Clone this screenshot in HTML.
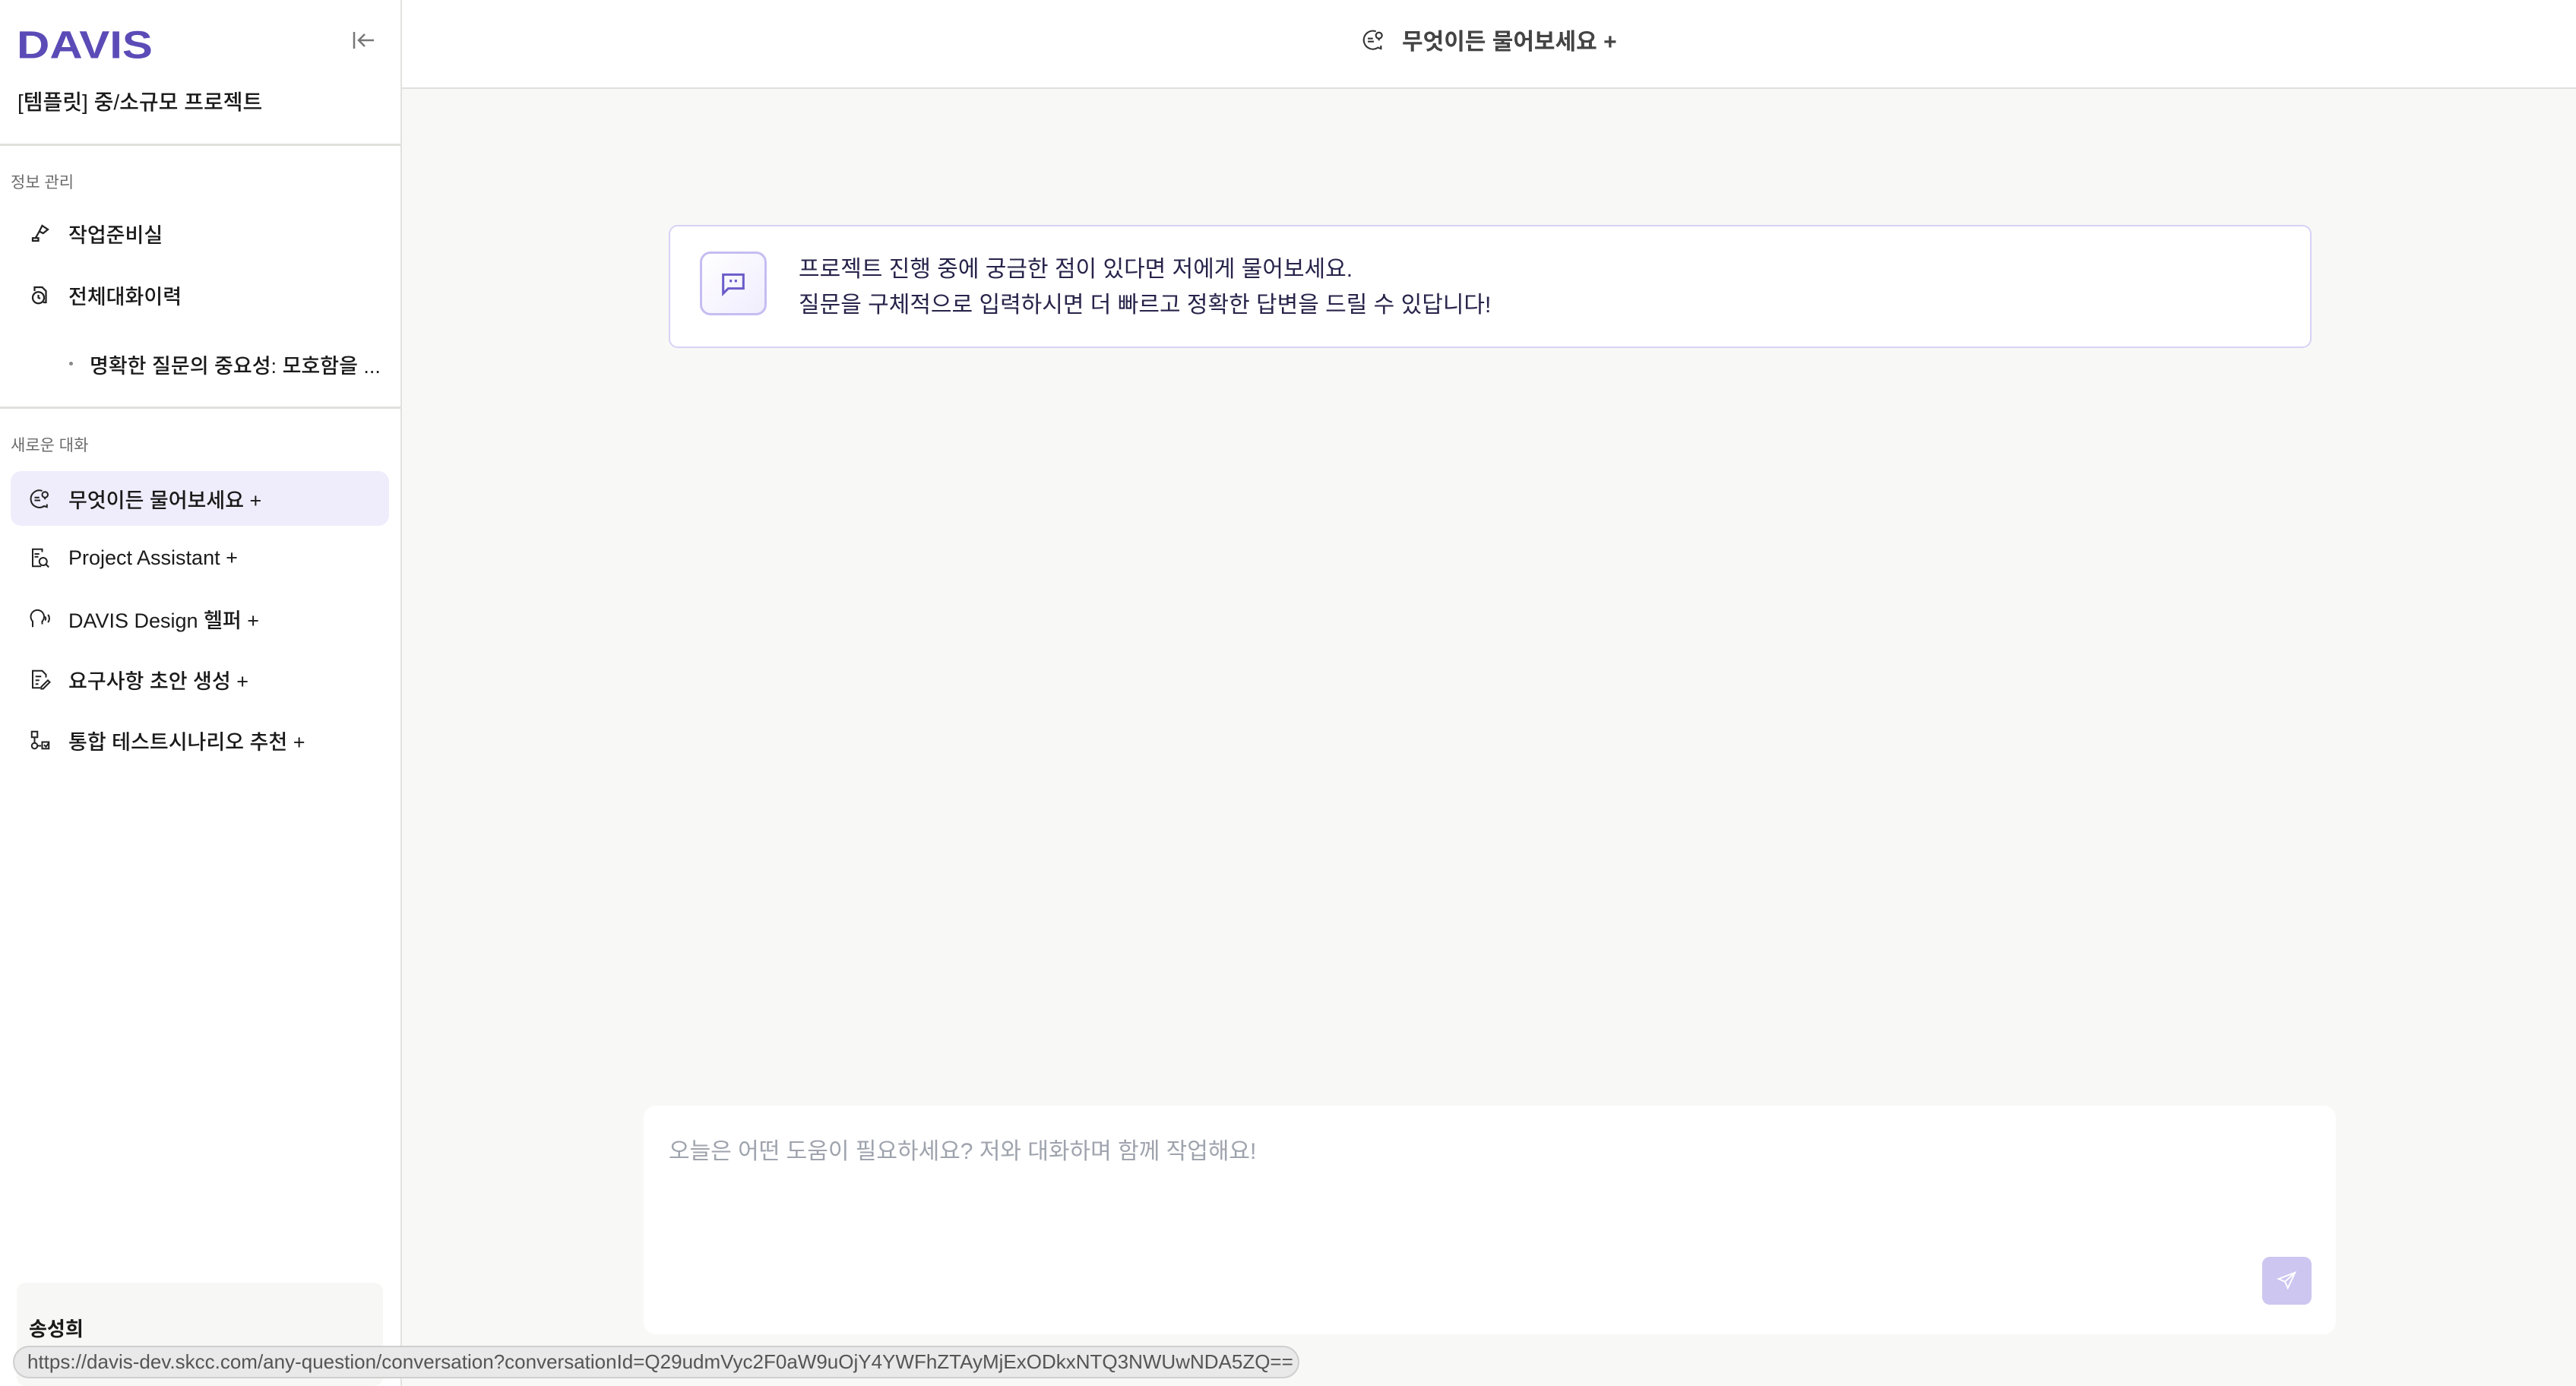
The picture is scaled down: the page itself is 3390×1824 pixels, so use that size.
<!DOCTYPE html>
<html><head><meta charset="utf-8"><style>
*{box-sizing:border-box;margin:0;padding:0}
body{width:3390px;height:1824px;overflow:hidden;background:#f8f8f6;font-family:"Liberation Sans","Noto Sans CJK KR",sans-serif;color:#1a1a1a;position:relative}
.side{position:absolute;left:0;top:0;width:529px;height:1824px;background:#fff;border-right:2px solid #e2e2df}
.abs{position:absolute}
.hr{position:absolute;left:0;width:527px;height:3px;background:#e0e0dc}
.item{position:absolute;left:14px;width:498px;height:72px;border-radius:14px;display:flex;align-items:center;font-size:27px;font-weight:500}
.item svg{position:absolute;left:24px}
.item span{position:absolute;left:76px}
.sec{position:absolute;left:14px;font-size:21px;color:#6b6b6b}
</style></head><body>
<div class="side">
  <div class="abs" style="left:22px;top:25px;font-size:60px;line-height:60px;font-weight:900;color:#5b4bb7;transform:scaleY(0.85);transform-origin:0 100%">DAVIS</div>
  <svg class="abs" style="left:462px;top:38px" width="34" height="30" viewBox="0 0 34 30"><path d="M4 4v22M30 15H10M18 7l-8 8 8 8" stroke="#777" stroke-width="2.5" fill="none"/></svg>
  <div class="abs" style="left:23px;top:113px;font-size:28px;font-weight:500">[템플릿] 중/소규모 프로젝트</div>
  <div class="hr" style="top:189px"></div>
  <div class="sec" style="top:224px">정보 관리</div>
  <div class="item" style="top:271px"><svg width="30" height="30" viewBox="0 0 24 24" fill="none" stroke="#222" stroke-width="1.8"><path d="M4 20h6v-3H4zM7 17l4-7M11 10l3-6 6 4-5 4z"/></svg><span style="left:76px">작업준비실</span></div>
  <div class="item" style="top:352px"><svg width="30" height="30" viewBox="0 0 24 24" fill="none" stroke="#222" stroke-width="1.8"><circle cx="10" cy="15" r="6"/><path d="M10 12v3l2 1M6 8V4h8l4 4v12h-3"/></svg><span>전체대화이력</span></div>
  <div class="abs" style="left:91px;top:476px;width:5px;height:5px;border-radius:50%;background:#888"></div>
  <div class="abs" style="left:118px;top:460px;font-size:27px;font-weight:500">명확한 질문의 중요성: 모호함을 ...</div>
  <div class="hr" style="top:535px"></div>
  <div class="sec" style="top:570px">새로운 대화</div>
  <div class="item" style="top:620px;background:#efedfb"><svg width="30" height="30" viewBox="0 0 24 24" fill="none" stroke="#222" stroke-width="1.6"><path d="M14 4a9 9 0 1 0 2 16l3 1v-3"/><path d="M6 11h5M6 14h6"/><circle cx="17" cy="8" r="3"/><path d="M17 11v2"/></svg><span>무엇이든 물어보세요 +</span></div>
  <div class="item" style="top:698px"><svg width="30" height="30" viewBox="0 0 24 24" fill="none" stroke="#222" stroke-width="1.6"><path d="M13 21H4V3h10v3M6 8h5M6 11h4"/><circle cx="15" cy="16" r="4"/><path d="M18 19l3 3"/></svg><span>Project Assistant +</span></div>
  <div class="item" style="top:778px"><svg width="30" height="30" viewBox="0 0 24 24" fill="none" stroke="#222" stroke-width="1.6"><path d="M4 21v-6a7 7 0 1 1 10 0v3M17 10c1 1 1 3 0 4M20 8c2 2 2 6 0 8"/></svg><span>DAVIS Design 헬퍼 +</span></div>
  <div class="item" style="top:858px"><svg width="30" height="30" viewBox="0 0 24 24" fill="none" stroke="#222" stroke-width="1.6"><path d="M12 21H4V3h10l4 4v3M7 9h6M7 13h4M7 17h3M13 20l7-7 2 2-7 7h-2z"/></svg><span>요구사항 초안 생성 +</span></div>
  <div class="item" style="top:938px"><svg width="30" height="30" viewBox="0 0 24 24" fill="none" stroke="#222" stroke-width="1.6"><rect x="3" y="3" width="6" height="6"/><path d="M6 9v6"/><circle cx="6" cy="18" r="3"/><path d="M9 18h4M14 14h7v7h-7zM16 17l2 2 3-4"/></svg><span>통합 테스트시나리오 추천 +</span></div>
  <div class="abs" style="left:22px;top:1688px;width:482px;height:136px;background:#f7f7f6;border-radius:12px"></div>
  <div class="abs" style="left:38px;top:1729px;font-size:26px;font-weight:700">송성희</div>
</div>
<div class="abs" style="left:529px;top:0;width:2861px;height:117px;background:#fff;border-bottom:2px solid #e0e0dc"></div>
<svg class="abs" style="left:1792px;top:36px" width="32" height="32" viewBox="0 0 24 24" fill="none" stroke="#333" stroke-width="1.6"><path d="M14 4a9 9 0 1 0 2 16l3 1v-3"/><path d="M6 11h5M6 14h6"/><circle cx="17" cy="8" r="3"/><path d="M17 11v2"/></svg>
<div class="abs" style="left:1845px;top:30px;font-size:30px;font-weight:700;color:#444">무엇이든 물어보세요 +</div>
<div class="abs" style="left:880px;top:296px;width:2162px;height:162px;background:#fff;border:2px solid #d8d2f6;border-radius:12px"></div>
<div class="abs" style="left:921px;top:331px;width:88px;height:84px;border:3px solid #c6bdf2;border-radius:14px;background:linear-gradient(135deg,#fff,#f0edfd)"></div>
<svg class="abs" style="left:945px;top:353px" width="40" height="40" viewBox="0 0 24 24" fill="none" stroke="#6a5cc9" stroke-width="1.8"><path d="M4 20V5h16v11H8z"/><path d="M10 9v2M14 9v2"/></svg>
<div class="abs" style="left:1051px;top:331px;font-size:30px;line-height:47px;color:#27234a">프로젝트 진행 중에 궁금한 점이 있다면 저에게 물어보세요.<br>질문을 구체적으로 입력하시면 더 빠르고 정확한 답변을 드릴 수 있답니다!</div>
<div class="abs" style="left:847px;top:1455px;width:2227px;height:301px;background:#fff;border-radius:16px"></div>
<div class="abs" style="left:880px;top:1490px;font-size:30px;color:#9ea3ad">오늘은 어떤 도움이 필요하세요? 저와 대화하며 함께 작업해요!</div>
<div class="abs" style="left:2977px;top:1654px;width:65px;height:63px;background:#cdc6f0;border-radius:10px"></div>
<svg class="abs" style="left:2995px;top:1671px" width="29" height="29" viewBox="0 0 24 24" fill="none" stroke="#fff" stroke-width="1.6"><path d="M21 3L3 10l7 3 3 7zM10 13l11-10"/></svg>
<div class="abs" style="left:17px;top:1771px;width:1693px;height:43px;background:#e9e9e9;border:2px solid #cfcfcf;border-radius:22px"></div>
<div class="abs" style="left:36px;top:1777px;font-size:26px;color:#555">https://davis-dev.skcc.com/any-question/conversation?conversationId=Q29udmVyc2F0aW9uOjY4YWFhZTAyMjExODkxNTQ3NWUwNDA5ZQ==</div>
</body></html>
